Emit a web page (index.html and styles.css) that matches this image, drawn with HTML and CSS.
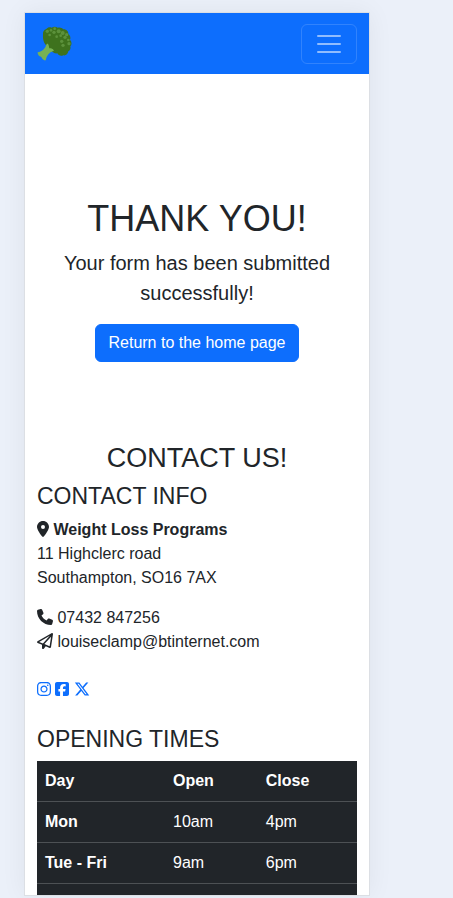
FILE: index.html
```html
<!DOCTYPE html>
<html lang="en">
<head>
  <meta charset="utf-8">
  <meta name="viewport" content="width=device-width, initial-scale=1">
  <title>Weight Loss Programs</title>
  <link rel="stylesheet" href="styles.css">
</head>
<body>
  <div class="device">
    <header class="navbar">
      <a class="brand" href="#" aria-label="Home">
        <svg class="brand-logo" viewBox="111 78 108 108" aria-hidden="true">
          <path fill="#3e721d" d="M129 104c-1-8 3-15 10-17 4-5 10-6 16-4 5-4 13-4 18 0 7-2 13 0 17 5 8-1 16 6 15 14 6 4 8 12 5 17 6 7 6 15 1 20 2 7-1 13-6 15-1 8-8 14-15 12-8 4-15 0-18-6-8 1-15-4-18-8-7-1-10-6-15-16-6-5-11-16-10-32z"/>
          <path fill="#77b255" d="M113 157c12-2 22-9 27-25 3-2 5 0 6 4l2 9c5-1 9 1 12 4 3 2 1 4-2 5-11 4-18 13-21 27-3 1-8-1-11-6-1-4-3-5-7-6-4-3-7-8-6-12z"/>
          <g fill="#5c913b">
            <circle cx="142" cy="94" r="5"/><circle cx="153" cy="91" r="4"/>
            <circle cx="164" cy="86" r="4"/><circle cx="162" cy="97" r="5"/>
            <circle cx="149" cy="105" r="4"/><circle cx="176" cy="94" r="6"/>
            <circle cx="188" cy="99" r="6"/><circle cx="170" cy="110" r="4"/>
            <circle cx="182" cy="107" r="4"/><circle cx="200" cy="104" r="5"/>
            <circle cx="195" cy="112" r="5"/><circle cx="185" cy="124" r="5"/>
            <circle cx="205" cy="120" r="4"/><circle cx="189" cy="136" r="5"/>
            <circle cx="207" cy="131" r="5"/>
          </g>
        </svg>
      </a>
      <button class="toggler" type="button" aria-label="Toggle navigation">
        <svg class="toggler-icon" viewBox="0 0 30 30" aria-hidden="true">
          <path stroke="currentColor" stroke-linecap="round" stroke-miterlimit="10" stroke-width="2" d="M4 7h22M4 15h22M4 23h22"/>
        </svg>
      </button>
    </header>

    <main>
      <section class="thanks">
        <h1 class="display">THANK YOU!</h1>
        <p class="lead">Your form has been submitted successfully!</p>
        <a class="btn" href="#">Return to the home page</a>
      </section>

      <section class="contact">
        <h2 class="section-title">CONTACT US!</h2>
        <h3>CONTACT INFO</h3>
        <p>
          <svg class="icon" viewBox="0 0 384 512" aria-hidden="true"><path d="M215.7 499.2C267 435 384 279.4 384 192C384 86 298 0 192 0S0 86 0 192c0 87.4 117 243 168.3 307.2c12.3 15.3 35.1 15.3 47.4 0zM192 128a64 64 0 1 1 0 128 64 64 0 1 1 0-128z"/></svg>
          <strong>Weight Loss Programs</strong><br>
          11 Highclerc road<br>
          Southampton, SO16 7AX
        </p>
        <p class="reach">
          <svg class="icon" viewBox="0 0 512 512" aria-hidden="true"><path d="M164.9 24.6c-7.7-18.6-28-28.5-47.4-23.2l-88 24C12.1 30.2 0 46 0 64C0 311.4 200.6 512 448 512c18 0 33.8-12.1 38.6-29.5l24-88c5.3-19.4-4.6-39.7-23.2-47.4l-96-40c-16.3-6.8-35.2-2.1-46.3 11.6L304.7 368C234.3 334.7 177.3 277.7 144 207.3L193.3 167c13.7-11.2 18.4-30 11.6-46.3l-40-96z"/></svg>
          07432 847256<br>
          <svg class="icon" viewBox="0 0 512 512" aria-hidden="true"><path d="M16.1 260.2c-22.6 12.9-20.5 47.3 3.6 57.3L160 376V479.3c0 18.1 14.6 32.7 32.7 32.7c9.7 0 18.9-4.3 25.1-11.8l62-74.3 123.9 51.6c18.9 7.9 40.8-4.5 43.9-24.7l64-416c1.9-12.1-3.4-24.3-13.5-31.2s-23.3-7.5-34-1.4l-448 256zm52.1 25.5L409.7 90.6 190.1 336l1.2 1L68.2 285.7zM403.3 425.4L236.7 355.9 450.8 116.6 403.3 425.4z"/></svg>
          louiseclamp@btinternet.com
        </p>
        <p class="social">
          <a href="#" aria-label="Instagram"><svg class="icon" viewBox="0 0 448 512" aria-hidden="true"><path d="M224.1 141c-63.6 0-114.9 51.3-114.9 114.9s51.3 114.9 114.9 114.9S339 319.5 339 255.9 287.7 141 224.1 141zm0 189.6c-41.1 0-74.7-33.5-74.7-74.7s33.5-74.7 74.7-74.7 74.7 33.5 74.7 74.7-33.6 74.7-74.7 74.7zm146.4-194.3c0 14.9-12 26.8-26.8 26.8-14.9 0-26.8-12-26.8-26.8s12-26.8 26.8-26.8 26.8 12 26.8 26.8zm76.1 27.2c-1.7-35.9-9.9-67.7-36.2-93.9-26.2-26.2-58-34.4-93.9-36.2-37-2.1-147.9-2.1-184.9 0-35.8 1.7-67.6 9.9-93.9 36.1s-34.4 58-36.2 93.9c-2.1 37-2.1 147.9 0 184.9 1.7 35.9 9.9 67.7 36.2 93.9s58 34.4 93.9 36.2c37 2.1 147.9 2.1 184.9 0 35.9-1.7 67.7-9.9 93.9-36.2 26.2-26.2 34.4-58 36.2-93.9 2.1-37 2.1-147.8 0-184.8zM398.8 388c-7.8 19.6-22.9 34.7-42.6 42.6-29.5 11.7-99.5 9-132.1 9s-102.7 2.6-132.1-9c-19.6-7.8-34.7-22.9-42.6-42.6-11.7-29.5-9-99.5-9-132.1s-2.6-102.7 9-132.1c7.8-19.6 22.9-34.7 42.6-42.6 29.5-11.7 99.5-9 132.1-9s102.7-2.6 132.1 9c19.6 7.8 34.7 22.9 42.6 42.6 11.7 29.5 9 99.5 9 132.1s2.7 102.7-9 132.1z"/></svg></a>
          <a href="#" aria-label="Facebook"><svg class="icon" viewBox="0 0 448 512" aria-hidden="true"><path d="M64 32C28.7 32 0 60.7 0 96V416c0 35.3 28.7 64 64 64h98.2V334.2H109.4V256h52.8V222.3c0-87.1 39.4-127.5 125-127.5c16.2 0 44.2 3.2 55.7 6.4V172c-6-.6-16.5-1-29.6-1c-42 0-58.2 15.9-58.2 57.2V256h83.6l-14.4 78.2H255V480H384c35.3 0 64-28.7 64-64V96c0-35.3-28.7-64-64-64H64z"/></svg></a>
          <a href="#" aria-label="X"><svg class="icon" viewBox="0 0 512 512" aria-hidden="true"><path d="M389.2 48h70.6L305.6 224.2 487 464H345L233.7 318.6 106.5 464H35.8L200.7 275.5 26.8 48H172.4L272.9 180.9 389.2 48zM364.4 421.8h39.1L151.1 88h-42L364.4 421.8z"/></svg></a>
        </p>

        <h3>OPENING TIMES</h3>
        <table class="hours">
          <thead>
            <tr><th class="col-day" scope="col">Day</th><th class="col-open" scope="col">Open</th><th scope="col">Close</th></tr>
          </thead>
          <tbody>
            <tr><th scope="row">Mon</th><td>10am</td><td>4pm</td></tr>
            <tr><th scope="row">Tue - Fri</th><td>9am</td><td>6pm</td></tr>
            <tr class="spacer"><td colspan="3"></td></tr>
          </tbody>
        </table>
      </section>
    </main>
  </div>
</body>
</html>
```
FILE: styles.css
```css
* {
  box-sizing: border-box;
}

body {
  margin: 0;
  height: 100vh;
  padding: 12px 83px 2px 24px;
  overflow: hidden;
  background: #ebf0f9;
  color: #212529;
  font-family: "Liberation Sans", Arial, sans-serif;
  font-size: 16px;
  line-height: 24px;
}

.device {
  height: 100%;
  overflow: hidden;
  background: #fff;
  border: 1px solid #dcdfe4;
  box-shadow: 0 0 24px rgba(0, 0, 0, 0.06);
}

.navbar {
  display: flex;
  align-items: center;
  justify-content: space-between;
  padding: 11px 12px 10px;
  background: #0d6efd;
}

.brand {
  display: flex;
}

.brand-logo {
  width: 36px;
  height: 36px;
}

.toggler {
  display: flex;
  padding: 4px 12px;
  background: transparent;
  border: 1px solid rgba(255, 255, 255, 0.15);
  border-radius: 6px;
  color: rgba(255, 255, 255, 0.55);
}

.toggler-icon {
  width: 30px;
  height: 30px;
}

h1,
h2,
h3,
p {
  margin: 0;
}

h1,
h2,
h3 {
  margin-bottom: 8px;
  font-weight: 400;
}

.thanks {
  padding: 123px 12px 80px;
  text-align: center;
}

.display {
  font-size: 36px;
  line-height: 43px;
}

.lead {
  margin-bottom: 16px;
  font-size: 20px;
  line-height: 30px;
}

.btn {
  display: inline-block;
  padding: 6px 12px;
  border: 1px solid #0d6efd;
  border-radius: 6px;
  background: #0d6efd;
  color: #fff;
  text-decoration: none;
  vertical-align: middle;
}

.contact {
  padding: 0 12px;
}

.section-title {
  font-size: 27px;
  line-height: 33px;
  text-align: center;
}

h3 {
  font-size: 23px;
  line-height: 27px;
}

.contact p {
  margin-bottom: 16px;
}

.contact .reach,
.contact .social {
  margin-bottom: 24px;
}

.icon {
  height: 16px;
  fill: currentColor;
  vertical-align: -2px;
}

.social a {
  color: #0d6efd;
  text-decoration: none;
}

.hours {
  width: 100%;
  border-collapse: collapse;
  background: #212529;
  color: #fff;
}

.hours th,
.hours td {
  padding: 8px;
  border-bottom: 1px solid #4d5154;
  text-align: left;
}

.hours .col-day {
  width: 40%;
}

.hours .col-open {
  width: 29%;
}

.hours .spacer td {
  height: 41px;
}
```
